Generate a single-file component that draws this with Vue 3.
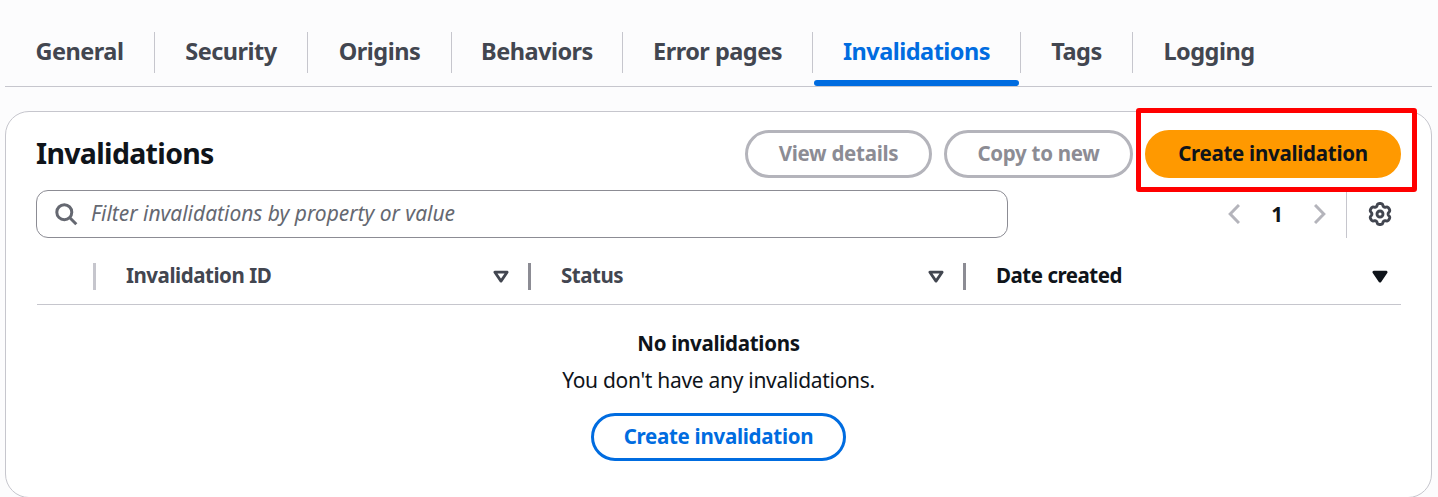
<script setup>
const tabs = [
  { label: 'General', width: 149 },
  { label: 'Security', width: 152 },
  { label: 'Origins', width: 143 },
  { label: 'Behaviors', width: 170 },
  { label: 'Error pages', width: 189 },
  { label: 'Invalidations', width: 207, active: true },
  { label: 'Tags', width: 111 },
  { label: 'Logging', width: 152 },
]

// Rounded six-lobed outline around (12, 12)
const gear = (() => {
  const pts = []
  const n = 120
  for (let i = 0; i < n; i++) {
    const a = (i / n) * Math.PI * 2 - Math.PI / 2
    const r = 9.2 + 1.35 * Math.tanh(1.6 * Math.cos(6 * (a + Math.PI / 2)) + 0.5)
    pts.push(`${(12 + r * Math.cos(a)).toFixed(2)} ${(12 + r * Math.sin(a)).toFixed(2)}`)
  }
  return `M${pts.join('L')}Z`
})()
</script>

<template>
  <div class="page">
    <nav class="tabs">
      <a v-for="t in tabs" :key="t.label" class="tab" :class="{ active: t.active }" :style="{ width: t.width + 'px' }">
        <span>{{ t.label }}</span>
      </a>
    </nav>

    <section class="card">
      <header class="head">
        <h2>Invalidations</h2>
        <div class="actions">
          <button class="btn disabled view">View details</button>
          <button class="btn disabled copy">Copy to new</button>
          <button class="btn primary">Create invalidation<i class="highlight"></i></button>
        </div>
      </header>

      <div class="tools">
        <label class="search">
          <svg width="24" height="24" viewBox="0 0 24 24" fill="none" stroke="#656871" stroke-width="3">
            <circle cx="10.3" cy="10.2" r="7.5" />
            <path d="M15.6 15.5L22.3 22.2" />
          </svg>
          <span>Filter invalidations by property or value</span>
        </label>
        <div class="pager">
          <svg width="12" height="20" viewBox="0 0 12 20" fill="none" stroke="#b4b4bb" stroke-width="3"><path d="M11 1L2.2 10L11 19" /></svg>
          <b>1</b>
          <svg width="12" height="20" viewBox="0 0 12 20" fill="none" stroke="#b4b4bb" stroke-width="3"><path d="M1 1L9.8 10L1 19" /></svg>
        </div>
        <div class="prefs">
          <svg width="24" height="24" viewBox="0 0 24 24" fill="none" stroke="#424650" stroke-width="2.9" stroke-linejoin="round">
            <path :d="gear" />
            <circle cx="12" cy="12" r="3" />
          </svg>
        </div>
      </div>

      <div class="thead">
        <div class="th select"></div>
        <div class="th">
          <span>Invalidation ID</span>
          <svg width="16" height="14" viewBox="0 0 16 14" fill="none" stroke="#424650" stroke-width="2.8" stroke-linejoin="round"><path d="M1.9 3.2H14.1L8 12.1Z" /></svg>
        </div>
        <div class="th">
          <span>Status</span>
          <svg width="16" height="14" viewBox="0 0 16 14" fill="none" stroke="#424650" stroke-width="2.8" stroke-linejoin="round"><path d="M1.9 3.2H14.1L8 12.1Z" /></svg>
        </div>
        <div class="th sorted">
          <span>Date created</span>
          <svg width="16" height="14" viewBox="0 0 16 14" fill="#0f141a" stroke="#0f141a" stroke-width="2.8" stroke-linejoin="round"><path d="M1.9 3.2H14.1L8 12.1Z" /></svg>
        </div>
      </div>

      <div class="empty">
        <b>No invalidations</b>
        <p>You don't have any invalidations.</p>
        <button class="btn normal">Create invalidation</button>
      </div>
    </section>
  </div>
</template>

<style>
body { background: #fcfcfd; }
</style>

<style scoped>
* { box-sizing: border-box; }
.page {
  height: 497px;
  overflow: hidden;
  padding: 0 6px 0 5px;
  font-family: "Noto Sans", "Open Sans", sans-serif;
  font-size: 21px;
  letter-spacing: -0.3px;
  color: #0f141a;
  background: #fcfcfd;
}
b { font-size: 20.5px; font-weight: 700; }
.tabs {
  display: flex;
  height: 87px;
  padding-top: 32px;
  border-bottom: 1px solid #c6c6cd;
}
.tab {
  position: relative;
  box-sizing: content-box;
  height: 41px;
  display: flex;
  align-items: flex-start;
  justify-content: center;
  white-space: nowrap;
  border-right: 1px solid #c6c6cd;
  font-size: 23.5px;
  font-weight: 700;
  letter-spacing: -0.52px;
  line-height: 38px;
  color: #424650;
}
.tab:last-child { border-right: 0; }
.tab.active { color: #006ce0; }
.tab.active::after {
  content: "";
  position: absolute;
  left: 1px;
  right: 1px;
  top: 48px;
  height: 6px;
  border-radius: 3px;
  background: #006ce0;
}
.card {
  height: 387px;
  margin-top: 24px;
  padding: 18px 30px 0;
  border: 1px solid #c6c6cd;
  border-radius: 24px;
  background: #fff;
}
.head { display: flex; justify-content: space-between; align-items: flex-start; height: 48px; }
h2 { margin: 0; font-size: 28.5px; line-height: 46px; font-weight: 700; letter-spacing: -0.68px; }
.actions { display: flex; gap: 12px; }
.btn {
  position: relative;
  height: 48px;
  padding: 0 0 2px;
  border: 3px solid;
  border-radius: 24px;
  background: #fff;
  font: inherit;
  font-size: 20.5px;
  font-weight: 700;
  letter-spacing: -0.28px;
  white-space: nowrap;
}
.disabled { color: #8c8c94; border-color: #b4b4bb; }
.view { width: 187px; }
.copy { width: 189px; }
.primary { width: 256px; color: #0f141a; background: #ff9900; border-color: #ff9900; }
.highlight {
  position: absolute;
  left: -12px;
  top: -25px;
  width: 281px;
  height: 84px;
  border: 5px solid #f00;
  border-radius: 3px;
}
.tools { display: flex; height: 48px; margin-top: 12px; }
.search {
  display: flex;
  align-items: center;
  width: 972px;
  padding-left: 17px;
  border: 1px solid #8c8c94;
  border-radius: 12px;
}
.search span { margin-left: 13px; padding-bottom: 2px; font-style: italic; letter-spacing: -0.02px; color: #656871; }
.pager { display: flex; align-items: center; margin-left: 220px; width: 98px; justify-content: space-between; }
.pager b { padding-bottom: 1px; }
.prefs {
  display: flex;
  align-items: center;
  margin-left: 20px;
  padding-left: 21px;
  border-left: 1px solid #c6c6cd;
}
.thead {
  display: flex;
  height: 67px;
  margin-left: 1px;
  border-bottom: 1px solid #c6c6cd;
  font-size: 20.5px;
  font-weight: 700;
  letter-spacing: -0.47px;
  color: #424650;
}
.th {
  display: flex;
  align-items: center;
  justify-content: space-between;
  position: relative;
  width: 435px;
  height: 76px;
  padding: 0 22px 0 30px;
}
.th span { padding-bottom: 2px; }
.th.select { width: 59px; padding: 0; }
.th::after {
  content: "";
  position: absolute;
  right: 0;
  top: 25px;
  width: 3px;
  height: 27px;
  background: #8c8c94;
}
.th.select::after { background: #c6c6cd; }
.th.sorted { color: #0f141a; padding-right: 13px; }
.th.sorted::after { display: none; }
.empty { display: flex; flex-direction: column; align-items: center; padding-top: 23px; line-height: 30px; }
.empty p { margin: 7px 0 18px; }
.normal { width: 255px; color: #006ce0; border-color: #006ce0; }
</style>
